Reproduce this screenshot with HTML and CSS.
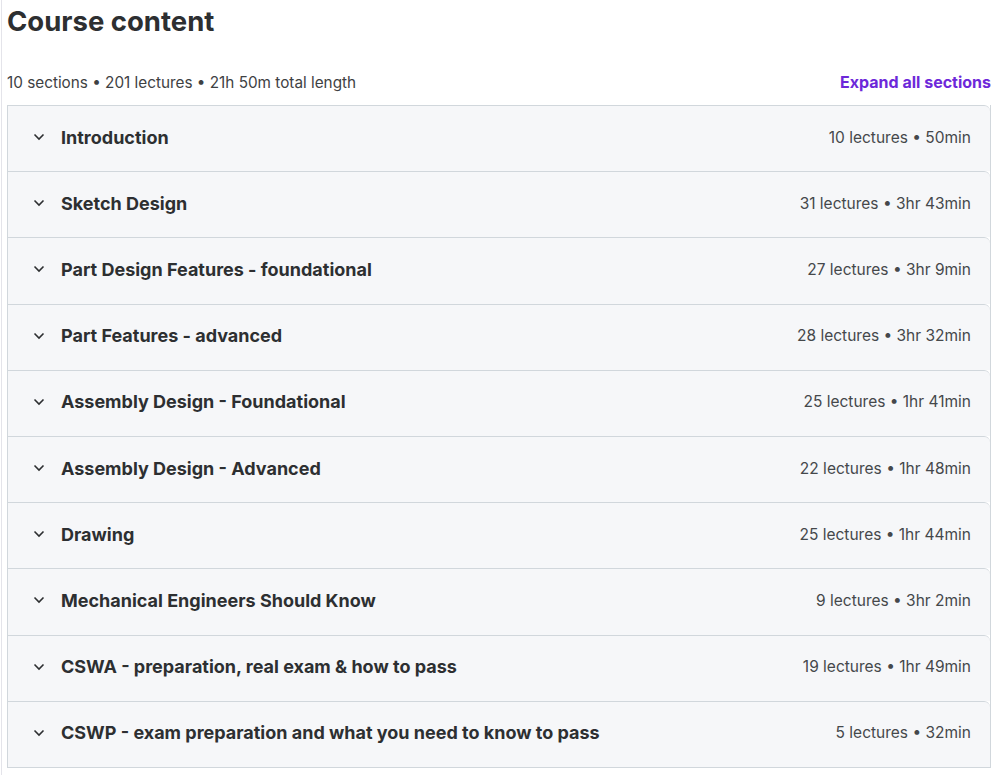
FILE: index.html
```html
<!DOCTYPE html>
<html lang="en">
<head>
  <meta charset="UTF-8" />
  <title>Course content</title>
  <meta name="viewport" content="width=device-width, initial-scale=1.0" />
  <link rel="stylesheet" href="styles.css">
</head>
<body>
  <div class="page">
    <h2 class="title">Course content</h2>

    <div class="meta">
      <span>10 sections • 201 lectures • 21h 50m total length</span>
      <a href="#" class="expand">Expand all sections</a>
    </div>

    <!-- Sections list -->
    <div class="sections">
      <div class="section">
        <svg class="chev" viewBox="0 0 12 8"><path d="M1.5 1.5 L6 6 L10.5 1.5" /></svg>
        <span class="name">Introduction</span>
        <span class="info">10 lectures • 50min</span>
      </div>
      <div class="section">
        <svg class="chev" viewBox="0 0 12 8"><path d="M1.5 1.5 L6 6 L10.5 1.5" /></svg>
        <span class="name">Sketch Design</span>
        <span class="info">31 lectures • 3hr 43min</span>
      </div>
      <div class="section">
        <svg class="chev" viewBox="0 0 12 8"><path d="M1.5 1.5 L6 6 L10.5 1.5" /></svg>
        <span class="name">Part Design Features - foundational</span>
        <span class="info">27 lectures • 3hr 9min</span>
      </div>
      <div class="section">
        <svg class="chev" viewBox="0 0 12 8"><path d="M1.5 1.5 L6 6 L10.5 1.5" /></svg>
        <span class="name">Part Features - advanced</span>
        <span class="info">28 lectures • 3hr 32min</span>
      </div>
      <div class="section">
        <svg class="chev" viewBox="0 0 12 8"><path d="M1.5 1.5 L6 6 L10.5 1.5" /></svg>
        <span class="name">Assembly Design - Foundational</span>
        <span class="info">25 lectures • 1hr 41min</span>
      </div>
      <div class="section">
        <svg class="chev" viewBox="0 0 12 8"><path d="M1.5 1.5 L6 6 L10.5 1.5" /></svg>
        <span class="name">Assembly Design - Advanced</span>
        <span class="info">22 lectures • 1hr 48min</span>
      </div>
      <div class="section">
        <svg class="chev" viewBox="0 0 12 8"><path d="M1.5 1.5 L6 6 L10.5 1.5" /></svg>
        <span class="name">Drawing</span>
        <span class="info">25 lectures • 1hr 44min</span>
      </div>
      <div class="section">
        <svg class="chev" viewBox="0 0 12 8"><path d="M1.5 1.5 L6 6 L10.5 1.5" /></svg>
        <span class="name">Mechanical Engineers Should Know</span>
        <span class="info">9 lectures • 3hr 2min</span>
      </div>
      <div class="section">
        <svg class="chev" viewBox="0 0 12 8"><path d="M1.5 1.5 L6 6 L10.5 1.5" /></svg>
        <span class="name">CSWA - preparation, real exam &amp; how to pass</span>
        <span class="info">19 lectures • 1hr 49min</span>
      </div>
      <div class="section">
        <svg class="chev" viewBox="0 0 12 8"><path d="M1.5 1.5 L6 6 L10.5 1.5" /></svg>
        <span class="name">CSWP - exam preparation and what you need to know to pass</span>
        <span class="info">5 lectures • 32min</span>
      </div>
    </div>
  </div>
</body>
</html>
```

FILE: styles.css
```css
body {
  margin: 0;
  font-family: Inter, "Noto Sans", sans-serif;
  color: #2d2f31;
  background: #fff;
}
.page {
  margin-left: 1px;
  min-height: 775px;
  border-left: 1px solid #e4e4ea;
  padding: 0 7px 0 5px;
}
.title {
  margin: 0;
  padding-top: 3px;
  font-size: 27.5px;
  line-height: 36px;
  font-weight: 700;
}
.meta {
  display: flex;
  justify-content: space-between;
  align-items: center;
  height: 34px;
  margin-top: 26px;
  font-size: 15.3px;
  color: #3e4143;
}
.expand {
  color: #6d28d9;
  font-weight: 700;
  font-size: 16px;
  text-decoration: none;
}
.sections {
  margin-top: 6px;
  border: 1px solid #d1d7dc;
  border-top: none;
}
.section {
  display: flex;
  align-items: center;
  box-sizing: border-box;
  height: 66.2px;
  padding: 0 19px 3px 25px;
  background: #f6f7f9;
  border-top: 1px solid #d1d7dc;
  border-radius: 0 6px 0 0;
}
.chev {
  width: 12px;
  height: 8px;
  fill: none;
  stroke: #2d2f31;
  stroke-width: 1.6;
  margin-right: 16px;
}
.name {
  flex: 1;
  font-size: 18px;
  font-weight: 700;
}
.info {
  font-size: 15.5px;
  color: #45484b;
}
```
